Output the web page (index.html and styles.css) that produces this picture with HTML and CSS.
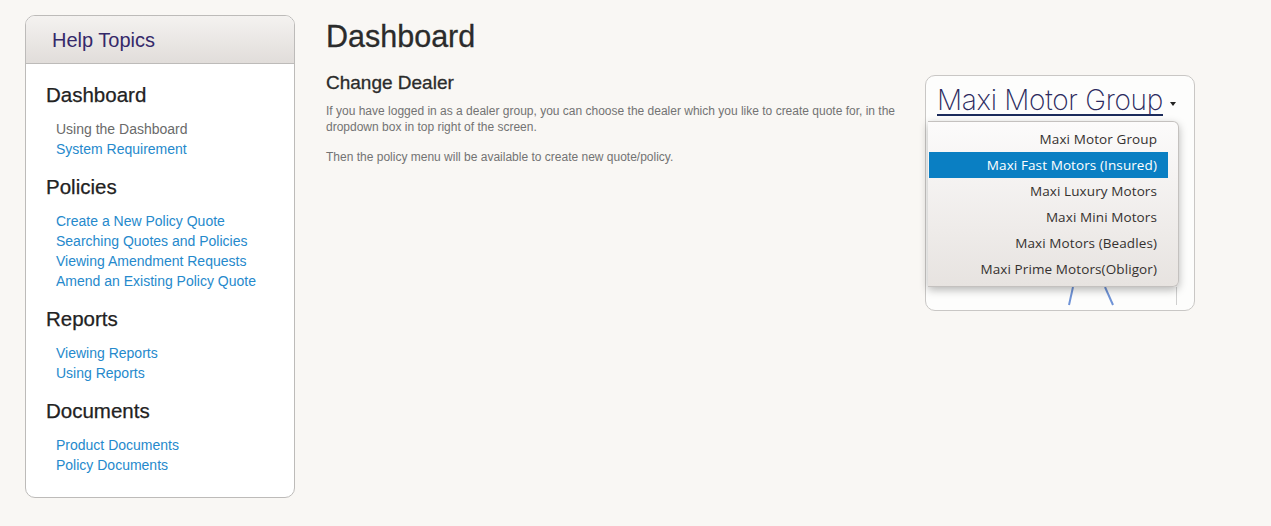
FILE: index.html
```html
<!DOCTYPE html>
<html lang="en">
<head>
<meta charset="utf-8">
<title>Help - Dashboard</title>
<link rel="stylesheet" href="styles.css">
</head>
<body>
<div class="page">
  <aside class="sidebar">
    <div class="sidebar-head">Help Topics</div>
    <div class="sidebar-body">
      <h3 class="topic">Dashboard</h3>
      <ul class="links">
        <li><a class="current">Using the Dashboard</a></li>
        <li><a>System Requirement</a></li>
      </ul>
      <h3 class="topic">Policies</h3>
      <ul class="links">
        <li><a>Create a New Policy Quote</a></li>
        <li><a>Searching Quotes and Policies</a></li>
        <li><a>Viewing Amendment Requests</a></li>
        <li><a>Amend an Existing Policy Quote</a></li>
      </ul>
      <h3 class="topic">Reports</h3>
      <ul class="links">
        <li><a>Viewing Reports</a></li>
        <li><a>Using Reports</a></li>
      </ul>
      <h3 class="topic">Documents</h3>
      <ul class="links">
        <li><a>Product Documents</a></li>
        <li><a>Policy Documents</a></li>
      </ul>
    </div>
  </aside>
  <main class="main">
    <h1 class="title">Dashboard</h1>
    <div class="row">
      <div class="text">
        <h2 class="subtitle">Change Dealer</h2>
        <p class="para">If you have logged in as a dealer group, you can choose the dealer which you like to create quote for, in the dropdown box in top right of the screen.</p>
        <p class="para">Then the policy menu will be available to create new quote/policy.</p>
      </div>
      <div class="shot">
        <div class="dealer"><span class="dealer-name">Maxi Motor Group</span><span class="caret"></span></div>
        <svg class="chart" width="270" height="30" viewBox="0 0 270 30">
          <line x1="147" y1="0" x2="143" y2="18" stroke="#6f93d6" stroke-width="2"/>
          <line x1="179" y1="0" x2="187" y2="18" stroke="#6f93d6" stroke-width="2"/>
          <line x1="250.5" y1="0" x2="250.5" y2="18" stroke="#cfcfcf" stroke-width="1"/>
        </svg>
        <ul class="menu">
          <li class="item">Maxi Motor Group</li>
          <li class="item active">Maxi Fast Motors (Insured)</li>
          <li class="item">Maxi Luxury Motors</li>
          <li class="item">Maxi Mini Motors</li>
          <li class="item">Maxi Motors (Beadles)</li>
          <li class="item">Maxi Prime Motors(Obligor)</li>
        </ul>
      </div>
    </div>
  </main>
</div>
</body>
</html>
```

FILE: styles.css
```css
html, body {
  margin: 0;
  padding: 0;
}
body {
  background: #f9f7f4;
  font-family: "Liberation Sans", Arial, sans-serif;
  color: #333;
}
.page {
  display: flex;
  align-items: flex-start;
  gap: 31px;
  padding: 15px 0 0 25px;
}
.sidebar {
  box-sizing: border-box;
  width: 270px;
  background: #fff;
  border: 1px solid #bdbbb9;
  border-radius: 10px;
  overflow: hidden;
}
.sidebar-head {
  height: 47px;
  line-height: 48px;
  padding-left: 26px;
  font-size: 20px;
  color: #35296a;
  background: linear-gradient(#f4f2f0, #e1ddda);
  border-bottom: 1px solid #bdbbb9;
}
.sidebar-body {
  padding: 19px 20px 22px 20px;
}
.topic {
  margin: 0 0 12px 0;
  font-size: 20.5px;
  line-height: 24px;
  font-weight: normal;
  color: #222;
  -webkit-text-stroke: 0.25px #222;
}
.links {
  list-style: none;
  margin: 0 0 16px 0;
  padding: 0 0 0 10px;
}
.links:last-child {
  margin-bottom: 0;
}
.links li {
  font-size: 14px;
  line-height: 20px;
}
.links a {
  color: #2589cc;
  cursor: pointer;
}
.links a.current {
  color: #6a6a6a;
}
.main {
  margin-top: 3px;
}
.title {
  margin: 0;
  font-size: 30.5px;
  line-height: 36px;
  font-weight: normal;
  color: #2b2b2b;
  -webkit-text-stroke: 0.3px #2b2b2b;
}
.row {
  display: flex;
  align-items: flex-start;
  margin-top: 17px;
}
.text {
  width: 576px;
}
.subtitle {
  margin: 0;
  font-size: 19px;
  line-height: 24px;
  font-weight: normal;
  color: #2b2b2b;
  -webkit-text-stroke: 0.3px #2b2b2b;
}
.para {
  margin: 8px 0 0 0;
  font-size: 12px;
  line-height: 16px;
  color: #737373;
}
.para + .para {
  margin-top: 14px;
}
.shot {
  position: relative;
  box-sizing: border-box;
  width: 270px;
  height: 236px;
  margin: 4px 0 0 23px;
  background: #fdfdfc;
  border: 1px solid #c9c7c5;
  border-radius: 10px;
}
.dealer {
  display: flex;
  align-items: flex-start;
  padding: 10px 0 0 11px;
}
.dealer-name {
  font-family: Inter, "Liberation Sans", sans-serif;
  font-weight: 200;
  font-size: 28px;
  line-height: 28px;
  letter-spacing: -0.3px;
  color: #2b2a5e;
  border-bottom: 2px solid #1c2c5c;
}
.caret {
  width: 0;
  height: 0;
  margin: 16px 0 0 7px;
  border-left: 3.5px solid transparent;
  border-right: 3.5px solid transparent;
  border-top: 4px solid #222;
}
.chart {
  position: absolute;
  left: 0;
  top: 211px;
}
.menu {
  position: absolute;
  left: 2px;
  top: 45px;
  box-sizing: border-box;
  width: 251px;
  height: 166px;
  margin: 0;
  padding: 4px 10px 0 1px;
  list-style: none;
  background: linear-gradient(#fcfbfb, #e7e3e0);
  border: 1px solid #c4c1bf;
  border-left: none;
  border-radius: 0 6px 6px 0;
  box-shadow: 0 3px 8px rgba(0, 0, 0, 0.28);
}
.item {
  height: 26px;
  line-height: 26px;
  padding-right: 11px;
  text-align: right;
  font-family: "Open Sans", "Liberation Sans", sans-serif;
  font-size: 13.5px;
  letter-spacing: 0.1px;
  color: #35312f;
}
.item.active {
  background: #0a7fc3;
  color: #fff;
}
```
